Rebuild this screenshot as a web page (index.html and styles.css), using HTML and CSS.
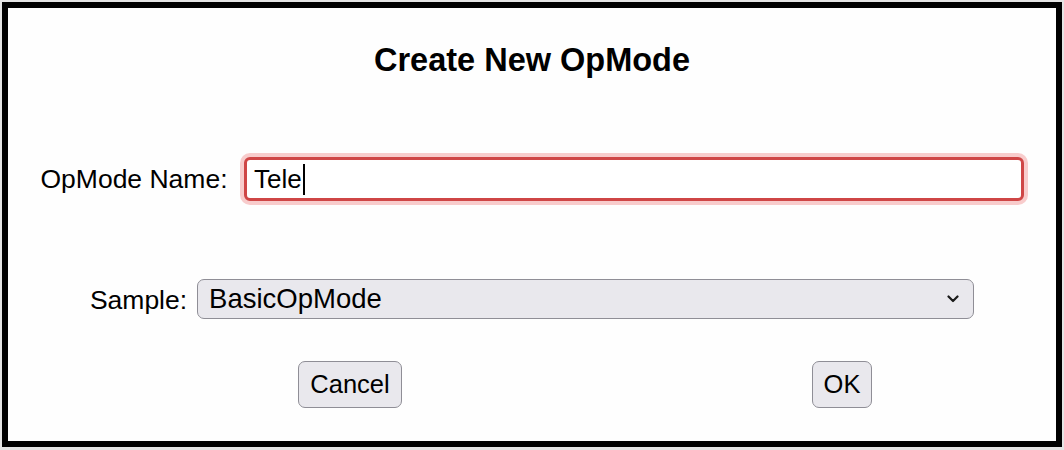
FILE: index.html
```html
<!DOCTYPE html>
<html>
<head>
<meta charset="utf-8">
<link rel="stylesheet" href="styles.css">
</head>
<body>
<div class="dialog">
  <h2 class="title">Create New OpMode</h2>
  <div class="row row-name">
    <label class="label">OpMode Name:</label>
    <div class="field"><span class="field-text">Tele</span><span class="caret"></span></div>
  </div>
  <div class="row row-sample">
    <label class="label">Sample:</label>
    <div class="select">
      <span class="select-text">BasicOpMode</span>
      <svg class="chevron" width="12" height="8" viewBox="0 0 12 8"><path d="M1.5 1.5 L6 6 L10.5 1.5" fill="none" stroke="#1a1a1a" stroke-width="2.2" stroke-linecap="round" stroke-linejoin="round"/></svg>
    </div>
  </div>
  <div class="buttons">
    <button class="btn btn-cancel">Cancel</button>
    <button class="btn btn-ok">OK</button>
  </div>
</div>
</body>
</html>
```
FILE: styles.css
```css
html, body {
  margin: 0;
  padding: 0;
}
body {
  background: #e4e4e4;
  font-family: "Liberation Sans", Arial, sans-serif;
  color: #000;
}
.dialog {
  margin: 2px;
  width: 1060px;
  height: 445px;
  box-sizing: border-box;
  border: 6px solid #000;
  background: #fefefe;
  display: flex;
  flex-direction: column;
}
.title {
  margin: 34px 0 0 0;
  font-size: 32.5px;
  line-height: 36px;
  font-weight: bold;
  text-align: center;
}
.row {
  display: flex;
  align-items: center;
  justify-content: center;
}
.label {
  font-size: 26.5px;
  line-height: 30px;
}
.row-name {
  margin-top: 79px;
  gap: 16px;
}
.field {
  width: 780px;
  height: 44px;
  box-sizing: border-box;
  border: 3.5px solid #cf4646;
  border-radius: 6px;
  box-shadow: 0 0 0 4px #f8cccc;
  background: #fff;
  display: flex;
  align-items: center;
  padding-left: 7.5px;
  font-size: 26px;
}
.caret {
  display: inline-block;
  width: 2px;
  height: 31px;
  background: #000;
  margin-left: 1px;
}
.row-sample {
  margin-top: 78px;
  gap: 10px;
}
.row-sample .label {
  position: relative;
  top: 1px;
}
.select {
  width: 777px;
  height: 40px;
  box-sizing: border-box;
  border: 1.5px solid #8f8e96;
  border-radius: 7px;
  background: #e9e8ed;
  display: flex;
  align-items: center;
  justify-content: space-between;
  padding: 0 14px 0 11px;
  font-size: 27.5px;
}
.chevron {
  display: block;
}
.buttons {
  margin-top: 42px;
  display: flex;
  justify-content: space-between;
  padding: 0 184px 0 290px;
}
.btn {
  height: 47px;
  box-sizing: border-box;
  border: 1.5px solid #8f8e96;
  border-radius: 7px;
  background: #e9e8ed;
  font-family: "Liberation Sans", Arial, sans-serif;
  font-size: 25.5px;
  color: #000;
  padding: 0 10px;
  margin: 0;
}
.btn-cancel {
  width: 104px;
}
.btn-ok {
  width: 60px;
}
```
